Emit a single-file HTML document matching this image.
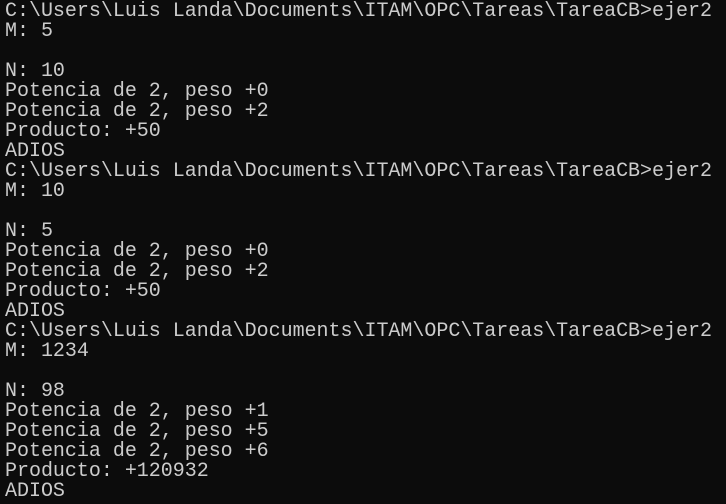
<!DOCTYPE html>
<html><head><meta charset="utf-8"><style>
html,body{margin:0;padding:0;background:#0c0c0c;width:726px;height:504px;overflow:hidden}
pre{margin:0;position:absolute;left:5px;top:2px;font-family:"Liberation Mono",monospace;font-size:20px;letter-spacing:-0.02px;line-height:20px;color:#cccccc}
</style></head><body><pre>C:\Users\Luis Landa\Documents\ITAM\OPC\Tareas\TareaCB&gt;ejer2
M: 5

N: 10
Potencia de 2, peso +0
Potencia de 2, peso +2
Producto: +50
ADIOS
C:\Users\Luis Landa\Documents\ITAM\OPC\Tareas\TareaCB&gt;ejer2
M: 10

N: 5
Potencia de 2, peso +0
Potencia de 2, peso +2
Producto: +50
ADIOS
C:\Users\Luis Landa\Documents\ITAM\OPC\Tareas\TareaCB&gt;ejer2
M: 1234

N: 98
Potencia de 2, peso +1
Potencia de 2, peso +5
Potencia de 2, peso +6
Producto: +120932
ADIOS</pre></body></html>
